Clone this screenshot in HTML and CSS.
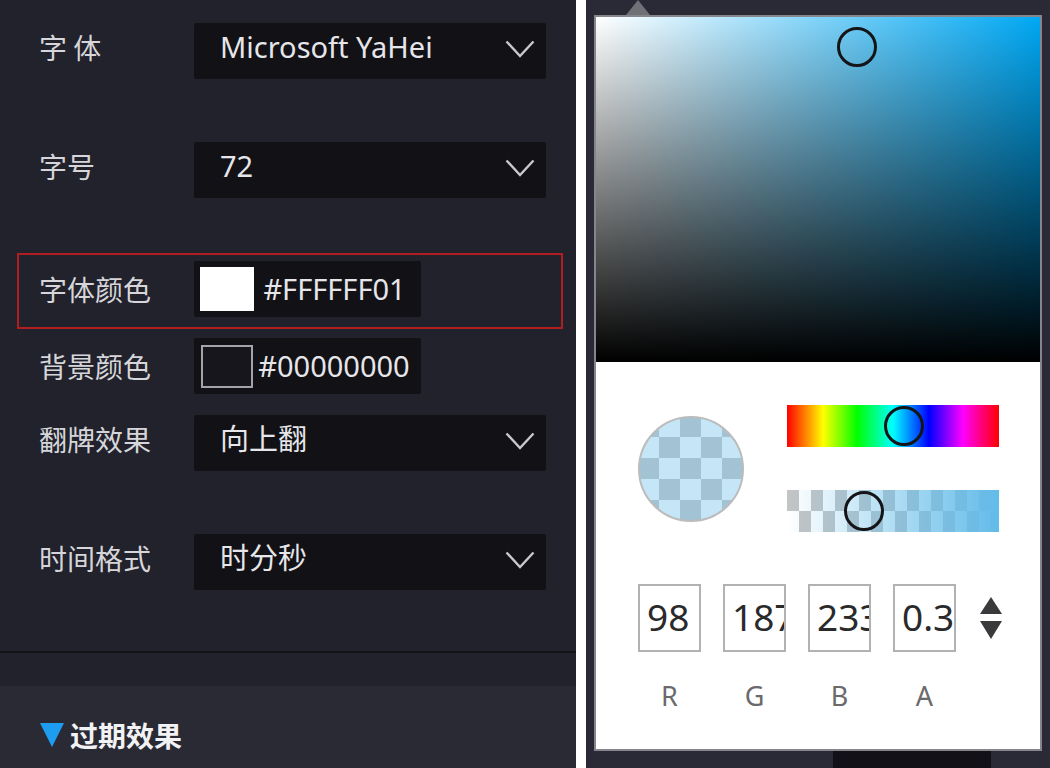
FILE: index.html
```html
<!DOCTYPE html>
<html lang="zh-CN">
<head>
<meta charset="utf-8">
<title>字体设置</title>
<link rel="stylesheet" href="styles.css">
</head>
<body>
<div class="page">
  <section class="left">
    <div class="fields">
      <div class="row row-select r1">
        <div class="label">字&nbsp;体</div>
        <div class="select">
          <span class="val">Microsoft YaHei</span>
          <svg class="chev" viewBox="0 0 30 18" width="30" height="18"><polyline points="1.5,1.5 15,16 28.5,1.5" fill="none" stroke="#c9c9cc" stroke-width="2.4"/></svg>
        </div>
      </div>
      <div class="row row-select r2">
        <div class="label">字号</div>
        <div class="select">
          <span class="val">72</span>
          <svg class="chev" viewBox="0 0 30 18" width="30" height="18"><polyline points="1.5,1.5 15,16 28.5,1.5" fill="none" stroke="#c9c9cc" stroke-width="2.4"/></svg>
        </div>
      </div>
      <div class="highlight">
        <div class="row row-color">
          <div class="label">字体颜色</div>
          <div class="color">
            <span class="swatch swatch-white"></span>
            <span class="hex">#FFFFFF01</span>
          </div>
        </div>
      </div>
      <div class="row row-color r4">
        <div class="label">背景颜色</div>
        <div class="color">
          <span class="swatch swatch-dark"></span>
          <span class="hex">#00000000</span>
        </div>
      </div>
      <div class="row row-select r5">
        <div class="label">翻牌效果</div>
        <div class="select">
          <span class="val">向上翻</span>
          <svg class="chev" viewBox="0 0 30 18" width="30" height="18"><polyline points="1.5,1.5 15,16 28.5,1.5" fill="none" stroke="#c9c9cc" stroke-width="2.4"/></svg>
        </div>
      </div>
      <div class="row row-select r6">
        <div class="label">时间格式</div>
        <div class="select">
          <span class="val">时分秒</span>
          <svg class="chev" viewBox="0 0 30 18" width="30" height="18"><polyline points="1.5,1.5 15,16 28.5,1.5" fill="none" stroke="#c9c9cc" stroke-width="2.4"/></svg>
        </div>
      </div>
    </div>
    <div class="divider"></div>
    <div class="section-head">
      <svg class="tri" viewBox="0 0 24 24" width="24" height="24"><polygon points="0,0 24,0 12,24" fill="#1e9df0"/></svg>
      <span class="section-title">过期效果</span>
    </div>
  </section>

  <section class="right">
    <div class="picker">
      <span class="caret"></span>
      <div class="sv"><span class="thumb sv-thumb"></span></div>
      <div class="picker-body">
        <div class="mix">
          <div class="preview"></div>
          <div class="sliders">
            <div class="hue"><span class="thumb hue-thumb"></span></div>
            <div class="alpha"><span class="thumb alpha-thumb"></span></div>
          </div>
        </div>
        <div class="inputs">
          <div class="num">98</div>
          <div class="num">187</div>
          <div class="num">233</div>
          <div class="num">0.37</div>
          <svg class="spin" viewBox="0 0 22 42" width="22" height="42"><polygon points="0,17 11,0 22,17" fill="#3a3a3c"/><polygon points="0,24 22,24 11,42" fill="#3a3a3c"/></svg>
          <div class="ch">R</div>
          <div class="ch">G</div>
          <div class="ch">B</div>
          <div class="ch">A</div>
        </div>
      </div>
    </div>
    <div class="under"><span class="blackbox"></span></div>
  </section>
</div>
</body>
</html>
```

FILE: styles.css
```css
* { box-sizing: border-box; }

html, body {
  margin: 0;
  padding: 0;
  background: #ffffff;
}

body {
  font-family: "Noto Sans", "Noto Sans CJK SC", sans-serif;
}

.page {
  display: flex;
  gap: 10px;
  width: 1050px;
  height: 768px;
  overflow: hidden;
}

/* ---------- left panel ---------- */
.left {
  width: 576px;
  flex: none;
  background: #22222c;
  display: flex;
  flex-direction: column;
}

.fields {
  padding-top: 23px;
  display: flex;
  flex-direction: column;
}

.row {
  display: flex;
  align-items: center;
  height: 56px;
  padding-left: 39px;
}

.label {
  width: 155px;
  flex: none;
  font-family: "Noto Sans CJK SC", sans-serif;
  font-size: 28px;
  color: #d6d6da;
  line-height: 40px;
}

.row-select .label { padding-bottom: 9px; }

.select {
  width: 352px;
  height: 56px;
  background: #111116;
  border-radius: 2px;
  display: flex;
  align-items: center;
  justify-content: space-between;
  padding: 0 11px 9px 26px;
}

.val {
  font-size: 29px;
  color: #e6e6ea;
  line-height: 40px;
}

.chev { display: block; margin-top: 5px; }

.r2 { margin-top: 63px; }
.r4 { margin-top: 9px; }
.r5 { margin-top: 21px; }
.r6 { margin-top: 63px; }

.highlight {
  margin: 55px 0 0 17px;
  width: 546px;
  border: 2px solid #b01e22;
  padding: 6px 0 10px 20px;
}

.highlight .row { padding-left: 0; }

.color {
  width: 227px;
  height: 56px;
  background: #111116;
  border-radius: 2px;
  display: flex;
  align-items: center;
  padding: 0 6px;
}

.swatch {
  width: 54px;
  height: 44px;
  flex: none;
}

.swatch-white { background: #ffffff; }

.swatch-dark {
  width: 52px;
  height: 43px;
  margin-left: 1px;
  background: #16161c;
  border: 2px solid #a3a3a8;
}

.hex {
  flex: 1;
  text-align: center;
  font-size: 29px;
  color: #e6e6ea;
  line-height: 40px;
}

.divider {
  margin-top: 61px;
  height: 2px;
  background: #121217;
}

.section-head {
  margin-top: 33px;
  flex: 1;
  background: #2a2a35;
  display: flex;
  align-items: center;
  padding: 16px 0 0 40px;
  gap: 6px;
}

.tri { display: block; }

.section-title {
  font-family: "Noto Sans CJK SC", sans-serif;
  font-weight: 700;
  font-size: 28px;
  color: #f2f2f4;
  line-height: 40px;
}

/* ---------- right panel ---------- */
.right {
  flex: 1;
  background: #2a2a36;
  display: flex;
  flex-direction: column;
  padding: 15px 8px 0 8px;
}

.picker {
  position: relative;
  height: 736px;
  border: 2px solid #85858b;
  background: #ffffff;
  display: flex;
  flex-direction: column;
}

.caret {
  position: absolute;
  top: -17px;
  left: 30px;
  width: 0;
  height: 0;
  border-left: 12px solid transparent;
  border-right: 12px solid transparent;
  border-bottom: 15px solid #707077;
}

.sv {
  position: relative;
  height: 345px;
  flex: none;
  background:
    linear-gradient(to top, #000000, rgba(0, 0, 0, 0)),
    linear-gradient(to right, #ffffff, #00a8f4);
}

.thumb {
  position: absolute;
  width: 40px;
  height: 40px;
  border: 3px solid #151517;
  border-radius: 50%;
}

.sv-thumb { left: 241px; top: 10px; }

.picker-body {
  flex: 1;
  padding: 43px 0 0 42px;
}

.mix {
  display: flex;
  align-items: center;
  gap: 43px;
}

.preview {
  width: 106px;
  height: 106px;
  border-radius: 50%;
  border: 2px solid #bcbcbc;
  background-color: #ffffff;
  background-image:
    linear-gradient(rgba(98, 187, 233, 0.37), rgba(98, 187, 233, 0.37)),
    repeating-conic-gradient(#ffffff 0 25%, #c8c8c8 0 50%);
  background-size: 100% 100%, 42px 42px;
  background-origin: border-box;
  background-position: 0 0, 0 0;
}

.sliders {
  display: flex;
  flex-direction: column;
  gap: 43px;
}

.hue, .alpha {
  position: relative;
  width: 212px;
  height: 42px;
}

.hue {
  background: linear-gradient(to right, #ff0000, #ffff00 17%, #00ff00 33%, #00ffff 50%, #0000ff 67%, #ff00ff 83%, #ff0000);
}

.hue-thumb { left: 97px; top: 1px; }

.alpha {
  background-color: #ffffff;
  background-image:
    linear-gradient(to right, rgba(98, 187, 233, 0), rgba(98, 187, 233, 1)),
    repeating-conic-gradient(#ffffff 0 25%, #c4c4c4 0 50%);
  background-size: 100% 100%, 24px 42px;
  background-position: 0 0, 0 0;
}

.alpha-thumb { left: 57px; top: 1px; }

.inputs {
  margin-top: 52px;
  display: grid;
  grid-template-columns: repeat(4, 63px) 22px;
  grid-template-rows: 68px auto;
  column-gap: 22px;
  row-gap: 28px;
  align-items: center;
}

.num {
  height: 68px;
  border: 2px solid #b2b2b2;
  overflow: hidden;
  white-space: nowrap;
  text-overflow: clip;
  font-family: "Noto Sans", sans-serif;
  font-size: 37px;
  line-height: 62px;
  color: #2a2a2c;
  padding-left: 7px;
}

.spin { display: block; margin-left: 2px; }

.ch {
  text-align: center;
  font-family: "Noto Sans", sans-serif;
  font-size: 27px;
  line-height: 32px;
  color: #6a6a6c;
}

.under {
  flex: 1;
  display: flex;
  padding-left: 239px;
}

.blackbox {
  width: 158px;
  background: #111117;
}
```
